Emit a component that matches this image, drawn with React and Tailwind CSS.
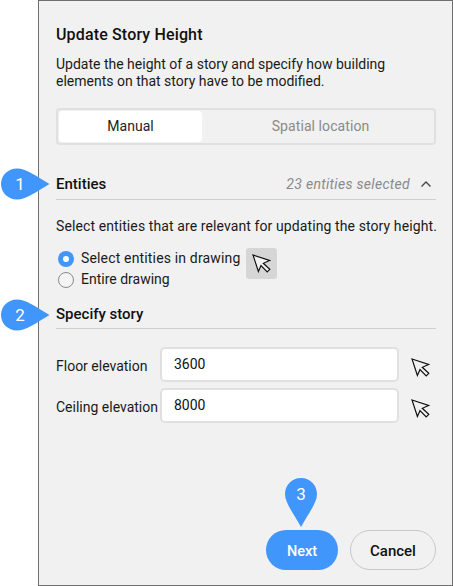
const font = { fontFamily: 'Roboto, "Liberation Sans", sans-serif' };

function Cursor({ className = "" }) {
  return (
    <svg width="19" height="19" viewBox="0 0 19 19" fill="none" className={className}>
      <path d="M1 1 L17.5 6.5 L11.3 9.3 L17.8 15.3 L15.2 18 L9 11.6 L6.4 17.5 Z" stroke="#111" strokeWidth="1.2" strokeLinejoin="miter" fill="#f2f2f2" />
    </svg>
  );
}

function SideMarker({ n, top }) {
  return (
    <div className="absolute left-0 w-[51px] h-[32px]" style={{ top }}>
      <svg width="51" height="32" viewBox="0 0 51 32" className="absolute inset-0">
        <path d="M17 0.5 C26 0.5 36 8 49.5 16 C36 24 26 31.5 17 31.5 C8 31.5 1 24.5 1 16 C1 7.5 8 0.5 17 0.5 Z" fill="#4096fb" />
      </svg>
      <span className="absolute left-[1px] w-[38px] top-0 h-[32px] flex items-center justify-center text-white text-[17px] leading-none">{n}</span>
    </div>
  );
}

function Field({ label, value }) {
  return (
    <div className="flex items-center">
      <div className="w-[104px] text-[14px] text-[#1a1a1a] whitespace-nowrap pt-[3px]">{label}</div>
      <div className="w-[239px] h-[35px] bg-white border-2 border-[#e0e0e0] rounded-[5px] flex items-center pl-[12px] text-[14px] text-[#111] pb-[1px]">{value}</div>
      <Cursor className="ml-[12px] mt-[5px]" />
    </div>
  );
}

export default function App() {
  return (
    <div className="relative w-[453px] h-[586px] bg-white overflow-hidden" style={font}>
      <div className="ml-[38px] w-[415px] h-[586px] bg-[#f1f1f1] border border-[#6f6f6f] pl-[17px] pr-[16px] flex flex-col">
        <h1 className="text-[16px] font-medium text-[#111] leading-[20px] mt-[24px] tracking-[0.15px]">Update Story Height</h1>
        <p className="text-[14px] leading-[17px] text-[#1a1a1a] mt-[11px]">
          Update the height of a story and specify how building<br />elements on that story have to be modified.
        </p>
        <div className="mt-[18px] h-[37px] border-2 border-[#e0e0e0] rounded-[4px] flex p-[1px]">
          <div className="w-[143px] bg-white rounded-[4px] flex items-center justify-center text-[14px] text-[#222]">Manual</div>
          <div className="flex-1 flex items-center justify-center text-[14px] text-[#8a8a8a] pl-[6px] tracking-[0.08px]">Spatial location</div>
        </div>
        <div className="mt-[28px] h-[27px] flex items-start justify-between border-b border-[#cfcfcf]">
          <span className="text-[15px] font-medium text-[#111] leading-[22px]">Entities</span>
          <div className="flex items-center h-[22px]">
            <span className="text-[14px] italic text-[#8a8a8a] tracking-[0.3px]">23 entities selected</span>
            <svg width="12" height="8" viewBox="0 0 12 8" fill="none" className="ml-[10px] mr-[4px]">
              <path d="M1.5 6.5 L6 2 L10.5 6.5" stroke="#444" strokeWidth="1.3" />
            </svg>
          </div>
        </div>
        <p className="text-[14px] leading-[17px] text-[#1a1a1a] mt-[18px] whitespace-nowrap tracking-[0.1px]">Select entities that are relevant for updating the story height.</p>
        <div className="flex mt-[13px]">
          <div className="flex flex-col gap-[4px] w-[190px]">
            <div className="flex items-center h-[17px] mt-[2px]">
              <span className="w-[16px] h-[16px] rounded-full bg-[#4096fb] flex items-center justify-center ml-[2px]">
                <span className="w-[6px] h-[6px] rounded-full bg-white" />
              </span>
              <span className="text-[14px] text-[#1a1a1a] ml-[7px] tracking-[0.16px]">Select entities in drawing</span>
            </div>
            <div className="flex items-center h-[17px]">
              <span className="w-[16px] h-[16px] rounded-full border border-[#8a8a8a] bg-[#f4f4f4] ml-[2px]" />
              <span className="text-[14px] text-[#1a1a1a] ml-[7px]">Entire drawing</span>
            </div>
          </div>
          <div className="w-[31px] h-[31px] bg-[#d6d6d6] rounded-[3px] flex items-center justify-center">
            <Cursor />
          </div>
        </div>
        <div className="mt-[13px] h-[28px] border-b border-[#cfcfcf]">
          <span className="text-[15px] font-medium text-[#111] leading-[26px]">Specify story</span>
        </div>
        <div className="flex flex-col gap-[6px] mt-[18px]">
          <Field label="Floor elevation" value="3600" />
          <Field label="Ceiling elevation" value="8000" />
        </div>
        <div className="mt-auto mb-[15px] flex justify-end gap-[12px]">
          <button className="w-[72px] h-[40px] rounded-full bg-[#4096fb] text-white text-[14.5px] font-medium pt-[3px]">Next</button>
          <button className="w-[86px] h-[40px] rounded-full border border-[#c8c8c8] text-[#111] text-[15px] font-medium pt-[3px]">Cancel</button>
        </div>
      </div>
      <SideMarker n="1" top={168} />
      <SideMarker n="2" top={299} />
      <div className="absolute left-[285px] top-[478px] w-[32px] h-[50px]">
        <svg width="32" height="50" viewBox="0 0 32 50" className="absolute inset-0">
          <path d="M16 0 C7 0 0 7 0 16 C0 25 9 36 16 49 C23 36 32 25 32 16 C32 7 25 0 16 0 Z" fill="#4096fb" />
        </svg>
        <span className="absolute inset-x-0 top-0 h-[32px] flex items-center justify-center text-white text-[17px] leading-none">3</span>
      </div>
    </div>
  );
}
